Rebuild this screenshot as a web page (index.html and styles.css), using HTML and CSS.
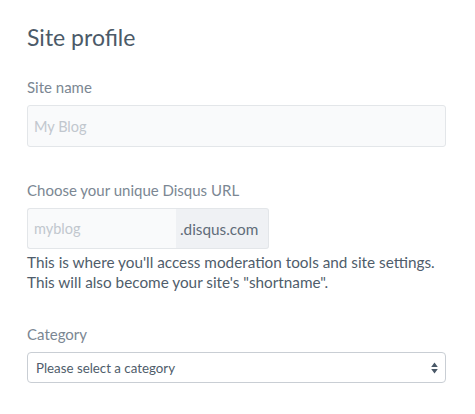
FILE: index.html
```html
<!DOCTYPE html>
<html lang="en">
<head>
<meta charset="utf-8">
<link rel="stylesheet" href="styles.css">
</head>
<body>
<form class="form">
  <h1 class="title">Site profile</h1>
  <div class="field field-name">
    <label class="label" for="name">Site name</label>
    <input class="input" id="name" type="text" placeholder="My Blog">
  </div>
  <div class="field field-url">
    <label class="label" for="url">Choose your unique Disqus URL</label>
    <div class="group">
      <input class="input input-url" id="url" type="text" placeholder="myblog">
      <span class="addon">.disqus.com</span>
    </div>
    <p class="help">This is where you'll access moderation tools and site settings.<br>This will also become your site's "shortname".</p>
  </div>
  <div class="field field-cat">
    <label class="label" for="cat">Category</label>
    <div class="select">
      <span class="select-text">Please select a category</span>
      <svg class="arrows" width="7" height="12" viewBox="0 0 7 12"><path d="M3.5 0.5 L6.8 5 H0.2 Z M3.5 11.5 L6.8 7 H0.2 Z" fill="#4a5968"/></svg>
    </div>
  </div>
</form>
</body>
</html>
```
FILE: styles.css
```css
* { box-sizing: border-box; }
html, body { margin: 0; padding: 0; background: #fff; }
body { font-family: Lato, "Noto Sans", sans-serif; color: #4f5d6b; }
.form { padding: 23px 29px 0 27px; display: flex; flex-direction: column; }
.title { margin: 0; font-size: 23px; font-weight: 400; line-height: 28px; color: #4c5a68; }
.field { display: flex; flex-direction: column; }
.field-name { margin-top: 26px; }
.field-url { margin-top: 33px; }
.field-cat { margin-top: 32px; }
.label { font-size: 15px; line-height: 20px; color: #7b8793; margin-bottom: 8px; }
.input { height: 42px; border: 1px solid #e3e6e9; border-radius: 3px; background: #f9fafb; padding: 0 6px; font: inherit; font-size: 14.5px; color: #4f5d6b; outline: none; }
.input::placeholder { color: #c1c7ce; }
.group { display: flex; width: 242px; height: 41px; }
.input-url { height: 41px; width: 149px; border-right: none; border-radius: 3px 0 0 3px; }
.addon { flex: 1; display: flex; align-items: center; padding-left: 4px; background: #eff1f4; border: 1px solid #e3e6e9; border-left: none; border-radius: 0 3px 3px 0; font-size: 15.3px; color: #5f6c79; }
.help { margin: 3px 0 0; font-size: 15.3px; line-height: 20px; color: #4f5d6b; }
.select { height: 31px; border: 1px solid #c9ced4; border-radius: 4px; display: flex; align-items: center; justify-content: space-between; padding: 0 7px 0 8px; background: #fff; }
.select-text { font-size: 13.3px; color: #4f5d6b; }
.arrows { display: block; }
```
